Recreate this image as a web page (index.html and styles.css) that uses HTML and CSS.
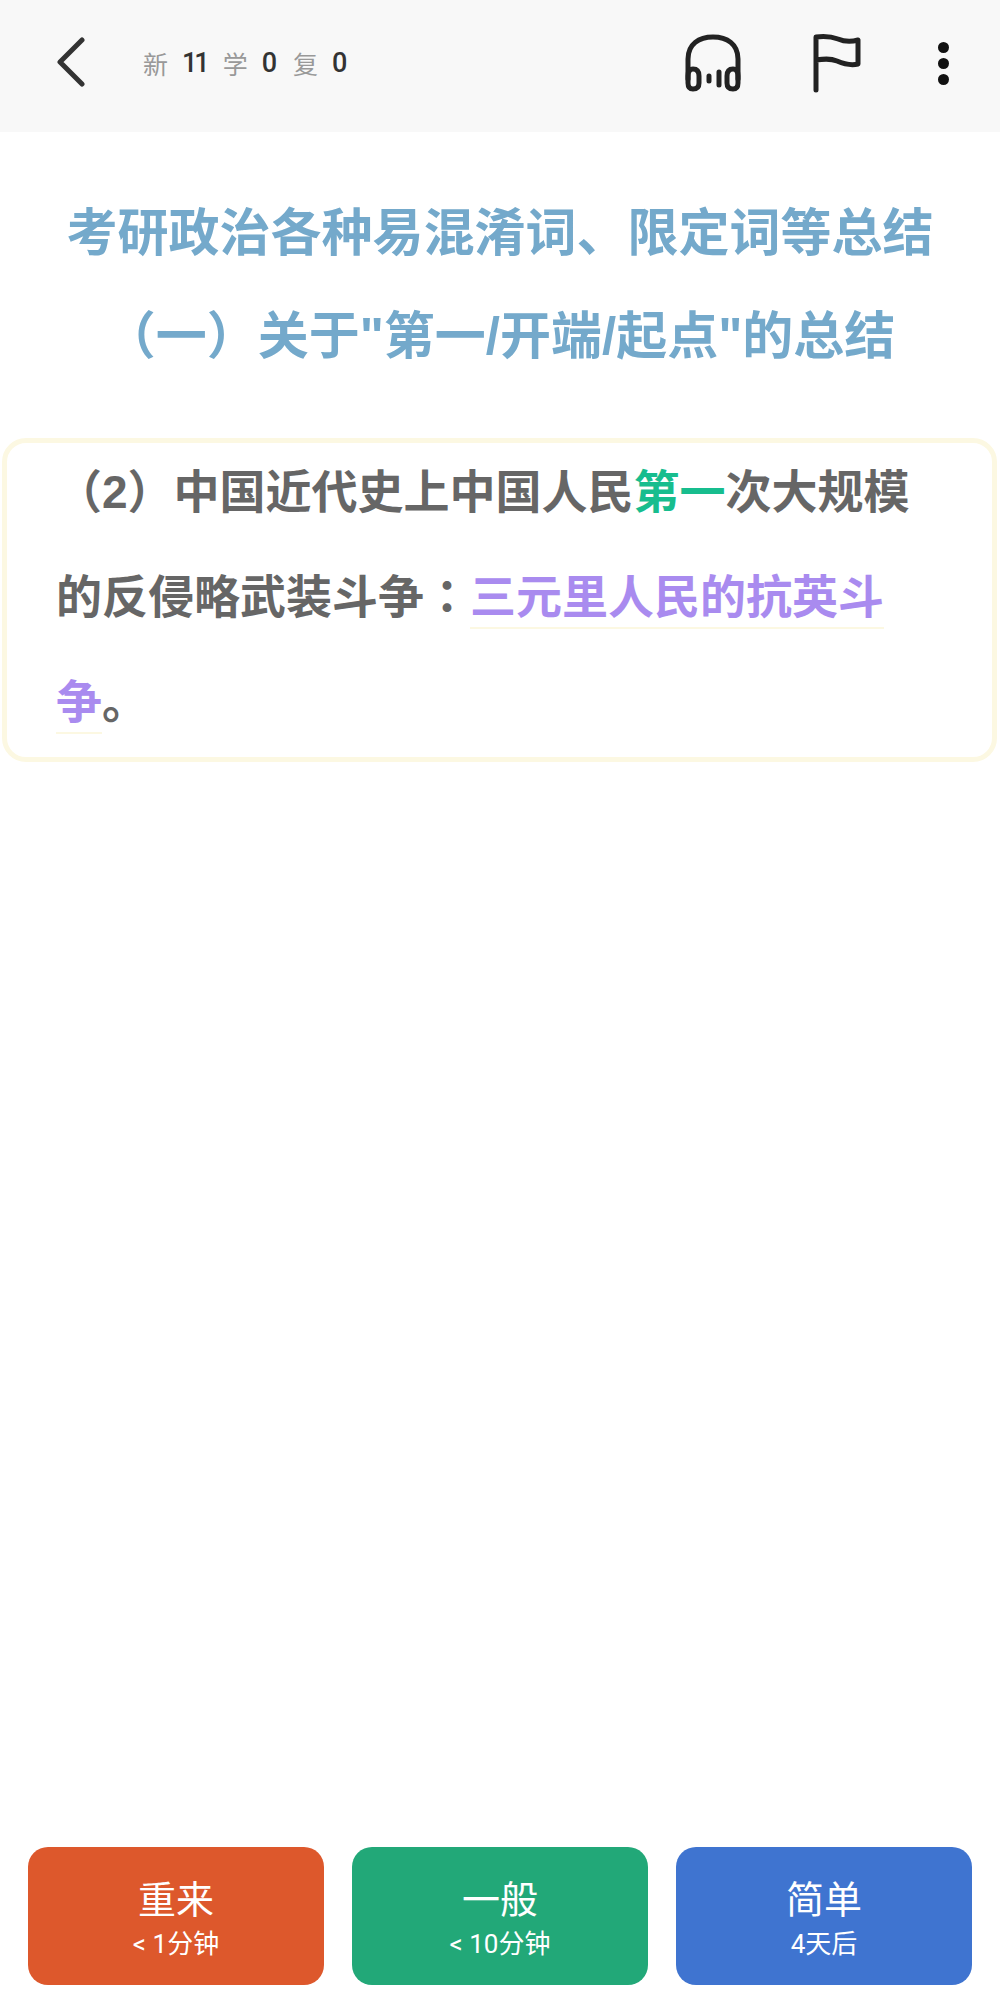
FILE: index.html
```html
<!DOCTYPE html>
<html lang="zh-CN">
<head>
  <meta charset="UTF-8" />
  <title>考研政治</title>
  <meta name="viewport" content="width=device-width, initial-scale=1" />
  <link rel="stylesheet" href="styles.css">
</head>
<body>
  <header class="topbar">
    <svg class="icon-back" width="32" height="52" viewBox="0 0 32 52">
      <path d="M26 3 L4 25 L26 47" />
    </svg>
    <div class="counts">
      <span class="label">新</span><b class="num n-new">11</b>
      <span class="label">学</span><b class="num">0</b>
      <span class="label">复</span><b class="num">0</b>
    </div>
    <div class="actions">
      <svg class="icon" width="60" height="60" viewBox="0 0 60 60">
        <path d="M5 46 V26 C5 11 16 4 30 4 C44 4 55 11 55 26 V46" />
        <path d="M5 43 C5 38 7 36 10 36 C14 36 16 38 16 43 V50 C16 54 14 56 10 56 C7 56 5 54 5 50 Z" />
        <path d="M55 43 C55 38 53 36 50 36 C46 36 44 38 44 43 V50 C44 54 46 56 50 56 C53 56 55 54 55 50 Z" />
        <path d="M26 43 V48 M36 39 V52" />
      </svg>
      <svg class="icon icon-flag" width="55" height="60" viewBox="0 0 55 60">
        <path d="M7 57 V4 C15 3 21 3 29 6 C36 9 42 9 49 7 V31 C41 33 35 31 28 28 C21 25 14 26 7 27" />
      </svg>
      <div class="more"><i></i><i></i><i></i></div>
    </div>
  </header>

  <main class="content">
    <h1 class="title">考研政治各种易混淆词、限定词等总结</h1>
    <h2 class="title">（一）关于"第一/开端/起点"的总结</h2>

    <div class="card">
      <p class="card-text">（2）中国近代史上中国人民<span class="green">第一</span>次大规模的反侵略武装斗争<span class="colon" lang="zh-TW">：</span><span class="answer">三元里人民的抗英斗争</span>。</p>
    </div>
  </main>

  <footer class="buttons">
    <button class="btn btn-red"><span class="btn-name">重来</span><span class="btn-time">&lt; 1分钟</span></button>
    <button class="btn btn-green"><span class="btn-name">一般</span><span class="btn-time">&lt; 10分钟</span></button>
    <button class="btn btn-blue"><span class="btn-name">简单</span><span class="btn-time">4天后</span></button>
  </footer>
</body>
</html>
```

FILE: styles.css
```css
:root {
  --ink: #333333;
  --muted: #999999;
  --body-text: #666666;
  --title: #74a9cb;
  --purple: #a98bef;
  --green: #17bd8e;
  --card-line: #fcf8e2;
}

* {
  box-sizing: border-box;
}

body {
  margin: 0;
  height: 2000px;
  display: flex;
  flex-direction: column;
  background-color: #ffffff;
  font-family: "Liberation Sans", "Noto Sans CJK SC", sans-serif;
}

.topbar {
  height: 132px;
  flex-shrink: 0;
  display: flex;
  align-items: center;
  padding: 0 51px 6px 56px;
  background-color: #f8f8f8;
}

.icon-back {
  fill: none;
  stroke: var(--ink);
  stroke-width: 5;
  stroke-linecap: round;
  stroke-linejoin: round;
}

.counts {
  display: flex;
  align-items: center;
  margin-left: 55px;
  font-size: 25px;
}

.label {
  color: var(--muted);
}

.num {
  margin: 0 16px 0 14px;
  color: var(--ink);
  font-family: Roboto, sans-serif;
  font-weight: 500;
  font-size: 27px;
}

.n-new {
  letter-spacing: -3px;
}

.actions {
  margin-left: auto;
  display: flex;
  align-items: center;
}

.icon {
  fill: none;
  stroke: #222222;
  stroke-width: 5;
  stroke-linecap: round;
  stroke-linejoin: round;
}

.icon-flag {
  margin-left: 66px;
}

.more {
  margin-left: 74px;
  display: flex;
  flex-direction: column;
  gap: 5px;
}

.more i {
  width: 11px;
  height: 11px;
  border-radius: 50%;
  background-color: #111111;
}

.content {
  flex: 1;
  padding-top: 50px;
}

.title {
  margin: 0;
  text-align: center;
  color: var(--title);
  font-size: 51px;
  font-weight: 700;
  line-height: 103px;
}

.card {
  margin: 50px 3px 0 2px;
  padding: 0 77px 0 49px;
  height: 324px;
  border: 5px solid var(--card-line);
  border-radius: 24px;
  color: var(--body-text);
  font-size: 46px;
  font-weight: 700;
  line-height: 105px;
}

.card-text {
  margin: -3px 0 0;
}

.green {
  color: var(--green);
}

.colon {
  font-family: "Noto Sans CJK TC", sans-serif;
  line-height: 1;
}

.answer {
  color: var(--purple);
  padding-bottom: 4px;
  border-bottom: 2px solid var(--card-line);
}

.buttons {
  display: flex;
  gap: 28px;
  padding: 0 28px 15px;
}

.btn {
  flex: 1;
  height: 138px;
  padding: 6px 0 0;
  display: flex;
  flex-direction: column;
  align-items: center;
  justify-content: center;
  border: none;
  border-radius: 20px;
  color: #ffffff;
  font-family: Roboto, "Noto Sans CJK SC", sans-serif;
}

.btn-red {
  background-color: #dd582c;
}

.btn-green {
  background-color: #22a878;
}

.btn-blue {
  background-color: #3f74d0;
}

.btn-name {
  font-size: 38px;
  line-height: 50px;
}

.btn-time {
  font-size: 26px;
  line-height: 38px;
}
```
